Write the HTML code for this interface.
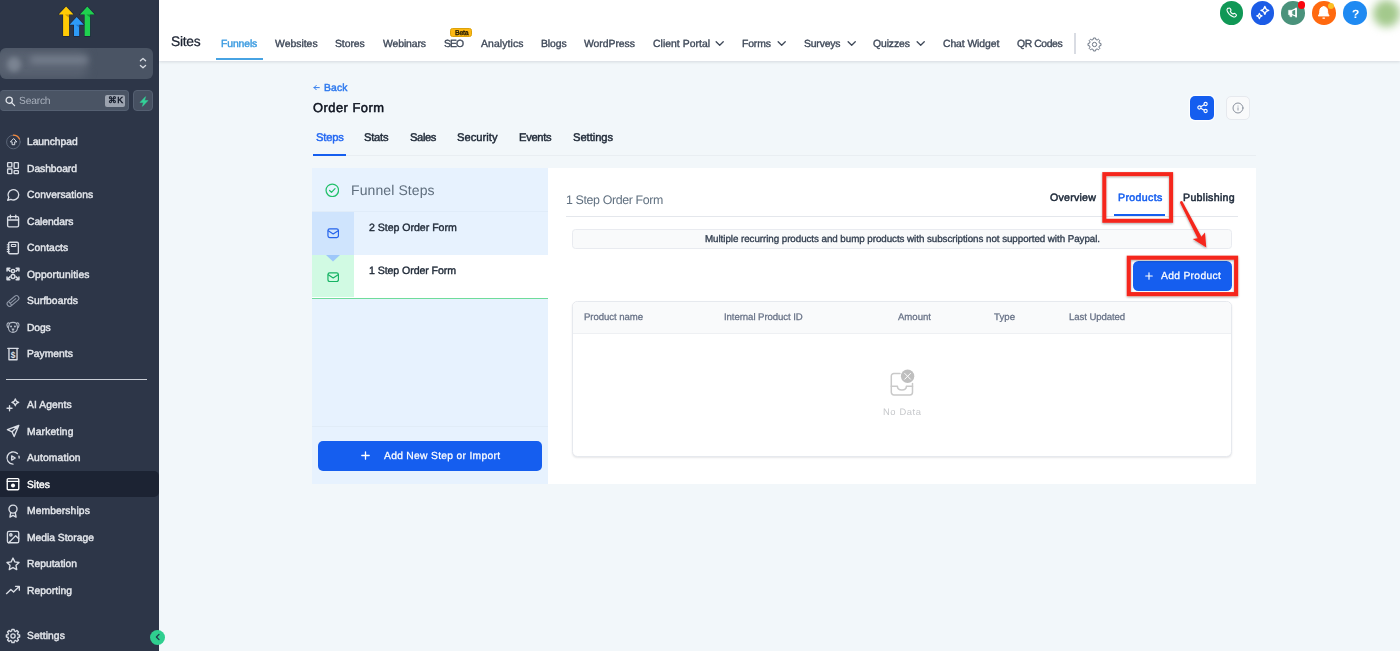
<!DOCTYPE html>
<html lang="en">
<head>
<meta charset="utf-8">
<title>Order Form - Funnels</title>
<style>
*{box-sizing:border-box;margin:0;padding:0}
html,body{width:1400px;height:651px;overflow:hidden;background:#f2f7fa;font-family:"Liberation Sans",sans-serif;color:#1f2937}
.abs{position:absolute}
.x{position:absolute;white-space:nowrap;display:block;will-change:transform;text-rendering:geometricPrecision}
#side{position:absolute;left:0;top:0;width:159px;height:651px;background:#2d3648}
#acct{position:absolute;left:0;top:48px;width:153px;height:30.500px;background:#4a5464;border-radius:6px}
#search{position:absolute;left:0;top:90px;width:128.500px;height:21px;background:#4a5464;border:1px solid #556072;border-left:0;border-radius:4px}
#search .k{position:absolute;left:105px;top:3.500px;width:20px;height:12px;background:#9ca3af;border-radius:2px}
#bolt{position:absolute;left:132.700px;top:90px;width:20.300px;height:21px;background:#465061;border:1px solid #556072;border-radius:4px}
.nav{position:absolute;left:0;width:159px;height:26px}
.nav svg{position:absolute;left:5px;top:5px;width:16px;height:16px;stroke:#d9dde5;fill:none;stroke-width:1.4;stroke-linecap:round;stroke-linejoin:round}
.nav.act{background:#1c2333;border-radius:0 5px 5px 0}
#top{position:absolute;left:159px;top:0;width:1241px;height:61px;background:#fff;box-shadow:0 1px 3px rgba(16,24,40,.13)}
.circ{position:absolute;top:1.300px;width:23.400px;height:23.400px;border-radius:50%}
.circ svg{position:absolute;left:0;top:0}
</style>
</head>
<body>
<div id="side">
  <svg class="abs" style="left:45px;top:0px" width="65" height="45" viewBox="45 0 65 45">
    <g stroke="#1c2439" stroke-width="1.200" stroke-linejoin="round" paint-order="stroke">
    <path d="M66.100 6.600L73.500 14.500H69.100V36.100H63.100V14.500H58.600z" fill="#ffcb05"/>
    <path d="M87.300 6.600L94.700 14.500H90.100V36.100H84.600V14.500H79.900z" fill="#1fd14f"/>
    <path d="M76.700 17.100L83.900 24.800H79.200V36.100H74V24.800H69.500z" fill="#2e9bf7"/>
    </g>
    <path d="M65 14.500H69.100V17.800z" fill="#b8860b" opacity=".75"/>
    <path d="M86.400 14.500H90.100V17.600z" fill="#0c8a2e" opacity=".75"/>
    <path d="M75.700 24.800H79.200V27.600z" fill="#1a6fc4" opacity=".75"/>
  </svg>
  <div id="acct" style="overflow:hidden">
    <div class="abs" style="left:-4px;top:2px;width:92px;height:27px;border-radius:8px;background:#5a6372;filter:blur(4px)"></div>
    <div class="abs" style="left:7px;top:8.5px;width:14px;height:15px;border-radius:50%;background:#7a8391;filter:blur(2.500px)"></div>
    <div class="abs" style="left:30px;top:8px;width:58px;height:8px;border-radius:4px;background:#737c8b;filter:blur(3px)"></div>
    <svg class="abs" style="left:138px;top:8px" width="10" height="14" viewBox="0 0 10 14" fill="none" stroke="#d5d9e0" stroke-width="1.300" stroke-linecap="round" stroke-linejoin="round"><path d="M2.400 4.800 L5 2.400 L7.600 4.800"/><path d="M2.400 9.400 L5 11.800 L7.600 9.400"/></svg>
  </div>
  <div id="search">
    <svg class="abs" style="left:4.500px;top:5px" width="11" height="11" viewBox="0 0 11 11" fill="none" stroke="#e2e6ec" stroke-width="1.3" stroke-linecap="round"><circle cx="4.2" cy="4.2" r="3.1"/><path d="M6.6 6.6 L9.6 9.6"/></svg>
    <span class="k"></span>
  </div>
  <span class="x" style="left:18.6px;top:95.0px;font-size:10.3px;line-height:14px;color:#a9b1bd;letter-spacing:-0.207px;">Search</span>
  <span class="x" style="left:107.6px;top:94.0px;font-size:8.8px;line-height:12px;color:#111827;letter-spacing:0.564px;-webkit-text-stroke:.4px currentColor;">⌘K</span>
  <div id="bolt"><svg class="abs" style="left:5.200px;top:5px" width="10" height="11" viewBox="0 0 10 11"><path d="M6.600 0.600 L1 6.400 H4.400 L3.400 10.400 L9 4.600 H5.600 Z" fill="#34d399" stroke="#34d399" stroke-width=".5" stroke-linejoin="round"/></svg></div>
  <div class="nav" style="top:128.6px"><svg viewBox="0 0 16 16"><circle cx="8.400" cy="8" r="6.800" stroke="#5f697c" stroke-width=".9"/><path d="M8.400 1.200 A6.800 6.800 0 0 1 14.500 5" stroke="#f5893b" stroke-width="1.200"/><path d="M8.400 4.800 L5.400 7.900 H7.100 V10.700 H9.700 V7.900 H11.400 Z" stroke-width="1"/></svg><span class="x" style="left:26.6px;top:7.4px;font-size:10.3px;line-height:14px;color:#e4e7ec;letter-spacing:-0.041px;-webkit-text-stroke:.42px currentColor;">Launchpad</span></div>
<div class="nav" style="top:155.1px"><svg viewBox="0 0 16 16"><g transform="translate(8 8) scale(.96) translate(-8 -8)"><rect x="2.4" y="2.4" width="4.4" height="4.4" rx=".6"/><rect x="9.2" y="2.4" width="4.4" height="6" rx=".6"/><rect x="2.4" y="9" width="4.4" height="4.8" rx=".6"/><rect x="9.2" y="10.8" width="4.4" height="3" rx=".6"/></g></svg><span class="x" style="left:26.6px;top:7.9px;font-size:10.3px;line-height:14px;color:#e4e7ec;letter-spacing:-0.053px;-webkit-text-stroke:.42px currentColor;">Dashboard</span></div>
<div class="nav" style="top:181.6px"><svg viewBox="0 0 16 16"><g transform="translate(8 8) scale(.96) translate(-8 -8)"><path d="M14 7.800a5.6 5.3 0 0 1-8.2 4.700L2.4 13.600l1.2-3.100A5.6 5.3 0 1 1 14 7.800z"/></g></svg><span class="x" style="left:26.6px;top:7.4px;font-size:10.3px;line-height:14px;color:#e4e7ec;letter-spacing:0.036px;-webkit-text-stroke:.42px currentColor;">Conversations</span></div>
<div class="nav" style="top:208.1px"><svg viewBox="0 0 16 16"><g transform="translate(8 8) scale(.96) translate(-8 -8)"><rect x="2.4" y="3.4" width="11.4" height="10.8" rx="1.4"/><path d="M5.3 1.800v3M10.9 1.800v3M2.4 7h11.4"/></g></svg><span class="x" style="left:26.6px;top:7.9px;font-size:10.3px;line-height:14px;color:#e4e7ec;letter-spacing:-0.060px;-webkit-text-stroke:.42px currentColor;">Calendars</span></div>
<div class="nav" style="top:234.6px"><svg viewBox="0 0 16 16"><g transform="translate(8 8) scale(.96) translate(-8 -8)"><rect x="3.4" y="2" width="10.2" height="12" rx="1.4"/><rect x="6.3" y="4.4" width="4.6" height="2" rx=".5" stroke-width="1.2"/><path d="M2 4.600h2M2 7h2M2 9.400h2M2 11.800h2" stroke-width="1.2"/></g></svg><span class="x" style="left:26.6px;top:7.4px;font-size:10.3px;line-height:14px;color:#e4e7ec;letter-spacing:0.082px;-webkit-text-stroke:.42px currentColor;">Contacts</span></div>
<div class="nav" style="top:261.1px"><svg viewBox="0 0 16 16"><g transform="translate(8 8) scale(.96) translate(-8 -8)"><g stroke-width="1.5"><circle cx="8" cy="4.9" r="1.7"/><circle cx="8" cy="10.6" r="2"/><path d="M1.8 5V2h3M14.2 5V2h-3M1.8 11v3h3M14.2 11v3h-3M2.2 2.400l2.600 2.600M13.800 2.400l-2.600 2.600M2.200 13.600l2.600-2.600M13.800 13.600l-2.600-2.600"/></g></g></svg><span class="x" style="left:26.6px;top:7.9px;font-size:10.3px;line-height:14px;color:#e4e7ec;letter-spacing:0.104px;-webkit-text-stroke:.42px currentColor;">Opportunities</span></div>
<div class="nav" style="top:287.6px"><svg viewBox="0 0 16 16"><g transform="translate(8 8) scale(.96) translate(-8 -8)"><g stroke="#8d96a6" stroke-width="1.100" transform="rotate(-40 8 8)"><rect x=".8" y="5.400" width="14.400" height="5.200" rx="2.600"/><path d="M4.200 5.600v4.800M4.200 8h7.600"/></g></g></svg><span class="x" style="left:26.6px;top:7.4px;font-size:10.3px;line-height:14px;color:#e4e7ec;letter-spacing:0.052px;-webkit-text-stroke:.42px currentColor;">Surfboards</span></div>
<div class="nav" style="top:314.1px"><svg viewBox="0 0 16 16"><g transform="translate(8 8) scale(.96) translate(-8 -8)"><g stroke="#b5bcc8" stroke-width="1.1"><path d="M4.4 4.200C3 3 1.4 4.2 1.8 6.600c.2 1.2.8 2 1.4 2.200M11.6 4.200c1.4-1.2 3 0 2.6 2.4-.2 1.2-.8 2-1.4 2.2"/><path d="M4.4 4.200c1-.8 2.2-1 3.6-1s2.6.2 3.6 1c.6 1.6 1.4 3.6 1 5.6-.4 2.2-2.4 3.8-4.6 3.800S3.8 12 3.4 9.800c-.4-2 .4-4 1-5.600z"/><circle cx="6" cy="7.4" r=".5" fill="#b5bcc8"/><circle cx="10" cy="7.4" r=".5" fill="#b5bcc8"/><path d="M7 10h2l-1 1.200zM8 11.200v1.2"/></g></g></svg><span class="x" style="left:26.6px;top:7.9px;font-size:10.3px;line-height:14px;color:#e4e7ec;letter-spacing:-0.137px;-webkit-text-stroke:.42px currentColor;">Dogs</span></div>
<div class="nav" style="top:340.6px"><svg viewBox="0 0 16 16"><g transform="translate(8 8) scale(.96) translate(-8 -8)"><path d="M2.6 2.200h10.800M3.8 2.200v11.800h8.400V2.2"/><text x="8" y="12" text-anchor="middle" font-size="8.6" font-weight="bold" fill="#dfe3ea" stroke="none" font-family="Liberation Sans, sans-serif">$</text></g></svg><span class="x" style="left:26.6px;top:7.4px;font-size:10.3px;line-height:14px;color:#e4e7ec;letter-spacing:0.000px;-webkit-text-stroke:.42px currentColor;">Payments</span></div>
<div class="abs" style="left:6px;top:378.500px;width:141px;height:1.500px;background:#c9ced6"></div>
<div class="nav" style="top:391.6px"><svg viewBox="0 0 16 16"><g transform="translate(8 8) scale(.96) translate(-8 -8)"><path d="M10.4 1.600c.4 2.4 1.2 3.2 3.6 3.6-2.4.4-3.2 1.2-3.6 3.6-.4-2.4-1.2-3.2-3.6-3.6 2.4-.4 3.2-1.2 3.6-3.600z" stroke-width="1.3"/><path d="M4.4 8.800v5.200M1.8 11.400h5.2"/></g></svg><span class="x" style="left:26.6px;top:7.4px;font-size:10.3px;line-height:14px;color:#e4e7ec;letter-spacing:0.078px;-webkit-text-stroke:.42px currentColor;">AI Agents</span></div>
<div class="nav" style="top:418.1px"><svg viewBox="0 0 16 16"><g transform="translate(8 8) scale(.96) translate(-8 -8)"><path d="M14 2.200L2.2 6.600l4.8 2.2 2.2 5zM14 2.200L7 8.8"/></g></svg><span class="x" style="left:26.6px;top:7.9px;font-size:10.3px;line-height:14px;color:#e4e7ec;letter-spacing:0.153px;-webkit-text-stroke:.42px currentColor;">Marketing</span></div>
<div class="nav" style="top:444.6px"><svg viewBox="0 0 16 16"><g transform="translate(8 8) scale(.96) translate(-8 -8)"><path d="M12.6 3.400A6.4 6.4 0 1 0 8 14.4" /><path d="M14.2 6.200A6.4 6.4 0 0 1 14.4 8"/><path d="M6.6 5.800v4.400l3.8-2.200z" stroke-width="1.3"/></g></svg><span class="x" style="left:26.6px;top:7.4px;font-size:10.3px;line-height:14px;color:#e4e7ec;letter-spacing:0.161px;-webkit-text-stroke:.42px currentColor;">Automation</span></div>
<div class="nav act" style="top:471.1px"><svg viewBox="0 0 16 16"><g transform="translate(8 8) scale(.96) translate(-8 -8)"><rect x="2" y="2.4" width="12" height="11.6" rx="1" stroke="#fff"/><path d="M2 5.200h12" stroke="#fff"/><circle cx="8" cy="9.6" r="2.1" fill="#fff" stroke="none"/></g></svg><span class="x" style="left:26.6px;top:7.9px;font-size:10.3px;line-height:14px;color:#fff;letter-spacing:-0.001px;-webkit-text-stroke:.42px currentColor;">Sites</span></div>
<div class="nav" style="top:497.6px"><svg viewBox="0 0 16 16"><g transform="translate(8 8) scale(.96) translate(-8 -8)"><circle cx="8" cy="6" r="4.2"/><path d="M5.6 9.600L4.8 14.4 8 12.600l3.2 1.8-.8-4.8"/></g></svg><span class="x" style="left:26.6px;top:7.4px;font-size:10.3px;line-height:14px;color:#e4e7ec;letter-spacing:0.099px;-webkit-text-stroke:.42px currentColor;">Memberships</span></div>
<div class="nav" style="top:524.1px"><svg viewBox="0 0 16 16"><g transform="translate(8 8) scale(.96) translate(-8 -8)"><rect x="2.2" y="2.2" width="11.8" height="11.8" rx="1.6"/><circle cx="5.8" cy="5.8" r="1.2"/><path d="M14 9.800l-3.2-3.200L3.6 14"/></g></svg><span class="x" style="left:26.6px;top:7.9px;font-size:10.3px;line-height:14px;color:#e4e7ec;letter-spacing:-0.006px;-webkit-text-stroke:.42px currentColor;">Media Storage</span></div>
<div class="nav" style="top:550.6px"><svg viewBox="0 0 16 16"><g transform="translate(8 8) scale(.96) translate(-8 -8)"><path d="M8 1.800l1.9 4 4.4.6-3.2 3 .8 4.400L8 11.700l-3.9 2.1.8-4.4-3.2-3 4.4-.6z"/></g></svg><span class="x" style="left:26.6px;top:7.4px;font-size:10.3px;line-height:14px;color:#e4e7ec;letter-spacing:0.029px;-webkit-text-stroke:.42px currentColor;">Reputation</span></div>
<div class="nav" style="top:577.1px"><svg viewBox="0 0 16 16"><g transform="translate(8 8) scale(.96) translate(-8 -8)"><path d="M1.2 11.800l4.6-4.4 2.8 2.6 5.8-5.600M10.6 4.200h4v4"/></g></svg><span class="x" style="left:26.6px;top:7.9px;font-size:10.3px;line-height:14px;color:#e4e7ec;letter-spacing:0.049px;-webkit-text-stroke:.42px currentColor;">Reporting</span></div>
<div class="nav" style="top:622.6px"><svg viewBox="0 0 16 16"><g transform="translate(8 8) scale(.96) translate(-8 -8)"><circle cx="8" cy="8" r="2.200"/><path d="M6.66 2.77L6.85 1.09L9.15 1.09L9.34 2.77L10.75 3.35L12.07 2.30L13.70 3.93L12.65 5.25L13.23 6.66L14.91 6.85L14.91 9.15L13.23 9.34L12.65 10.75L13.70 12.07L12.07 13.70L10.75 12.65L9.34 13.23L9.15 14.91L6.85 14.91L6.66 13.23L5.25 12.65L3.93 13.70L2.30 12.07L3.35 10.75L2.77 9.34L1.09 9.15L1.09 6.85L2.77 6.66L3.35 5.25L2.30 3.93L3.93 2.30L5.25 3.35z" stroke-width="1.400"/></g></svg><span class="x" style="left:26.6px;top:7.4px;font-size:10.3px;line-height:14px;color:#e4e7ec;letter-spacing:0.085px;-webkit-text-stroke:.42px currentColor;">Settings</span></div>
</div>
<div class="abs" style="left:150.100px;top:629.600px;width:15px;height:15px;border-radius:50%;background:#2fcf8f;z-index:5"><svg class="abs" style="left:3.500px;top:3.500px" width="8" height="8" viewBox="0 0 8 8" fill="none" stroke="#1f3b4a" stroke-width="1.3" stroke-linecap="round" stroke-linejoin="round"><path d="M5 1.400L2.4 4 5 6.6"/></svg></div>

<div id="top"></div>
<span class="x" style="left:171.2px;top:32.0px;font-size:13.8px;line-height:19px;color:#1d2433;letter-spacing:-0.257px;-webkit-text-stroke:.25px currentColor;">Sites</span>
<span class="x" style="left:221.4px;top:37.0px;font-size:10.4px;line-height:15px;color:#3b9be0;letter-spacing:-0.110px;-webkit-text-stroke:.42px currentColor;">Funnels</span>
<div class="abs" style="left:215.700px;top:57.700px;width:47.600px;height:2.100px;background:#47a3e3"></div>
<span class="x" style="left:275.1px;top:37.0px;font-size:10.4px;line-height:15px;color:#3f4959;letter-spacing:0.007px;-webkit-text-stroke:.36px currentColor;">Websites</span><span class="x" style="left:335.4px;top:37.0px;font-size:10.4px;line-height:15px;color:#3f4959;letter-spacing:-0.072px;-webkit-text-stroke:.36px currentColor;">Stores</span><span class="x" style="left:382.8px;top:37.0px;font-size:10.4px;line-height:15px;color:#3f4959;letter-spacing:-0.100px;-webkit-text-stroke:.36px currentColor;">Webinars</span><span class="x" style="left:443.9px;top:37.0px;font-size:10.4px;line-height:15px;color:#3f4959;letter-spacing:-0.984px;-webkit-text-stroke:.36px currentColor;">SEO</span><span class="x" style="left:480.6px;top:37.0px;font-size:10.4px;line-height:15px;color:#3f4959;letter-spacing:0.114px;-webkit-text-stroke:.36px currentColor;">Analytics</span><span class="x" style="left:540.9px;top:37.0px;font-size:10.4px;line-height:15px;color:#3f4959;letter-spacing:-0.060px;-webkit-text-stroke:.36px currentColor;">Blogs</span><span class="x" style="left:584.3px;top:37.0px;font-size:10.4px;line-height:15px;color:#3f4959;letter-spacing:-0.034px;-webkit-text-stroke:.36px currentColor;">WordPress</span><span class="x" style="left:652.5px;top:37.0px;font-size:10.4px;line-height:15px;color:#3f4959;letter-spacing:0.038px;-webkit-text-stroke:.36px currentColor;">Client Portal</span><span class="x" style="left:742.4px;top:37.0px;font-size:10.4px;line-height:15px;color:#3f4959;letter-spacing:-0.127px;-webkit-text-stroke:.36px currentColor;">Forms</span><span class="x" style="left:804.4px;top:37.0px;font-size:10.4px;line-height:15px;color:#3f4959;letter-spacing:-0.178px;-webkit-text-stroke:.36px currentColor;">Surveys</span><span class="x" style="left:873.4px;top:37.0px;font-size:10.4px;line-height:15px;color:#3f4959;letter-spacing:-0.107px;-webkit-text-stroke:.36px currentColor;">Quizzes</span><span class="x" style="left:943px;top:37.0px;font-size:10.4px;line-height:15px;color:#3f4959;letter-spacing:-0.090px;-webkit-text-stroke:.36px currentColor;">Chat Widget</span><span class="x" style="left:1016.9px;top:37.0px;font-size:10.4px;line-height:15px;color:#3f4959;letter-spacing:-0.414px;-webkit-text-stroke:.36px currentColor;">QR Codes</span>
<svg class="abs" style="left:715.3px;top:39.600px" width="9.400" height="7.500" viewBox="0 0 10 8" fill="none" stroke="#3f4959" stroke-width="1.400" stroke-linecap="round" stroke-linejoin="round"><path d="M1.2 1.8L5 5.6 8.8 1.8"/></svg><svg class="abs" style="left:777.3px;top:39.600px" width="9.400" height="7.500" viewBox="0 0 10 8" fill="none" stroke="#3f4959" stroke-width="1.400" stroke-linecap="round" stroke-linejoin="round"><path d="M1.2 1.8L5 5.6 8.8 1.8"/></svg><svg class="abs" style="left:846.8px;top:39.600px" width="9.400" height="7.500" viewBox="0 0 10 8" fill="none" stroke="#3f4959" stroke-width="1.400" stroke-linecap="round" stroke-linejoin="round"><path d="M1.2 1.8L5 5.6 8.8 1.8"/></svg><svg class="abs" style="left:915.9px;top:39.600px" width="9.400" height="7.500" viewBox="0 0 10 8" fill="none" stroke="#3f4959" stroke-width="1.400" stroke-linecap="round" stroke-linejoin="round"><path d="M1.2 1.8L5 5.6 8.8 1.8"/></svg>
<div class="abs" style="left:450.300px;top:28.200px;width:22.200px;height:8.800px;background:#fdb813;border:.6px solid #dca20a;border-radius:2.500px"></div>
<span class="x" style="left:454.8px;top:29.0px;font-size:7px;line-height:10px;color:#2b2003;letter-spacing:-0.252px;-webkit-text-stroke:.35px currentColor;">Beta</span>
<div class="abs" style="left:1074.200px;top:33.200px;width:1.700px;height:20.600px;background:#d9dce3"></div>
<svg class="abs" style="left:1087.200px;top:36.700px" width="15" height="15" viewBox="0 0 16 16" fill="none" stroke="#6b7483" stroke-width="1.050" stroke-linejoin="round"><circle cx="8" cy="8" r="2.300"/><path d="M6.63 2.67L6.85 1.09L9.15 1.09L9.37 2.67L10.80 3.27L12.07 2.30L13.70 3.93L12.73 5.20L13.33 6.63L14.91 6.85L14.91 9.15L13.33 9.37L12.73 10.80L13.70 12.07L12.07 13.70L10.80 12.73L9.37 13.33L9.15 14.91L6.85 14.91L6.63 13.33L5.20 12.73L3.93 13.70L2.30 12.07L3.27 10.80L2.67 9.37L1.09 9.15L1.09 6.85L2.67 6.63L3.27 5.20L2.30 3.93L3.93 2.30L5.20 3.27z"/></svg>
<div class="circ" style="left:1219.6000000000001px;background:#109856"><svg width="23.400" height="23.400" viewBox="0 0 24 24" fill="none" stroke="#fff" stroke-width="1.5" stroke-linecap="round" stroke-linejoin="round"><g transform="translate(12 12) scale(0.85) translate(-12 -12)"><path d="M8.3 6.6c.5-.5 1.300-.4 1.700.2l1 1.500c.3.5.2 1.100-.2 1.500l-.5.5c.6 1.500 1.900 2.800 3.400 3.400l.5-.5c.4-.4 1-.5 1.500-.2l1.500 1c.6.4.7 1.200.2 1.700l-.7.7c-.8.8-2 1-3 .6-3.300-1.300-5.900-3.900-7.200-7.200-.4-1-.2-2.200.6-3z" stroke-width="1.300"/></g></svg></div>
<div class="circ" style="left:1250.5px;background:#1c5ce6"><svg width="23.400" height="23.400" viewBox="0 0 24 24" fill="none" stroke="#fff" stroke-width="1.5" stroke-linecap="round" stroke-linejoin="round"><g transform="translate(12 12) scale(1) translate(-12 -12)"><path d="M14.200 5.600c.5 2.700 1.300 3.500 4 4-2.700.5-3.500 1.300-4 4-.5-2.700-1.300-3.500-4-4 2.700-.5 3.500-1.300 4-4z" stroke-width="1.400"/><path d="M8.600 12.600c.35 1.800.9 2.350 2.700 2.700-1.800.35-2.350.9-2.700 2.700-.35-1.800-.9-2.350-2.700-2.700 1.800-.35 2.350-.9 2.700-2.700z" stroke-width="1.300"/></g></svg></div>
<div class="circ" style="left:1281.4px;background:#4a927b"><svg width="23.400" height="23.400" viewBox="0 0 24 24" fill="none" stroke="#fff" stroke-width="1.5" stroke-linecap="round" stroke-linejoin="round"><g transform="translate(12 12) scale(0.86) translate(-12 -12)"><path d="M7.400 9.200H11.100V14.300H7.400z" fill="#fff" stroke="#fff" stroke-width=".8"/><path d="M8.500 14.300H11V16.800H9.200z" fill="#fff" stroke="#fff" stroke-width=".6"/><path d="M11.100 9.400L16 7.200V16.300L11.100 14.100" stroke-width="1.500"/><path d="M16.100 6.600V17" stroke-width="1.700"/></g></svg></div>
<div class="circ" style="left:1312.4px;background:#ff690f"><svg width="23.400" height="23.400" viewBox="0 0 24 24" fill="none" stroke="#fff" stroke-width="1.5" stroke-linecap="round" stroke-linejoin="round"><g transform="translate(12 12) scale(1) translate(-12 -12)"><path d="M12 5.800c-2.400 0-4 1.800-4 4.300 0 2.800-.7 4.200-1.600 5.200h11.200c-.9-1-1.600-2.400-1.600-5.200 0-2.500-1.600-4.300-4-4.300z" fill="#fff" stroke="#fff" stroke-width="1"/><path d="M11.200 17.500h1.600" stroke-width="1.300"/></g></svg></div>
<div class="circ" style="left:1343.4px;background:#1f8af2"><svg width="23.400" height="23.400" viewBox="0 0 24 24" fill="none" stroke="#fff" stroke-width="1.5" stroke-linecap="round" stroke-linejoin="round"><g transform="translate(12 12) scale(1) translate(-12 -12)"></g></svg></div>
<span class="x" style="left:1351.9px;top:6.0px;font-size:12px;line-height:17px;color:#fff;letter-spacing:-0.944px;font-weight:bold;">?</span>
<div class="abs" style="left:1297.600px;top:1.200px;width:7.700px;height:7.700px;border-radius:50%;background:#f9060e"></div>
<div class="abs" style="left:1328.300px;top:2.600px;width:6.200px;height:6.200px;border-radius:50%;background:#fbbf24"></div>
<div class="abs" style="left:1372.500px;top:0px;width:27px;height:27px;border-radius:50%;background:#a3c98c;filter:blur(4.500px)"></div>


<svg class="abs" style="left:313.300px;top:83.900px" width="7.200" height="7.200" viewBox="0 0 8 8" fill="none" stroke="#2e79ee" stroke-width="1.100" stroke-linecap="round" stroke-linejoin="round"><path d="M7 4H1.200M3.600 1.600L1.200 4l2.400 2.400"/></svg>
<span class="x" style="left:324.4px;top:82.0px;font-size:10.3px;line-height:14px;color:#2e79ee;letter-spacing:0.148px;-webkit-text-stroke:.45px currentColor;">Back</span>
<span class="x" style="left:312.8px;top:99.0px;font-size:12.9px;line-height:18px;color:#0c111d;letter-spacing:0.479px;-webkit-text-stroke:.5px currentColor;">Order Form</span>
<span class="x" style="left:315.5px;top:130.0px;font-size:11.2px;line-height:16px;color:#2468f2;letter-spacing:-0.202px;-webkit-text-stroke:.45px currentColor;">Steps</span>
<span class="x" style="left:364.2px;top:130.0px;font-size:11.2px;line-height:16px;color:#1f2937;letter-spacing:-0.240px;-webkit-text-stroke:.45px currentColor;">Stats</span><span class="x" style="left:409.9px;top:130.0px;font-size:11.2px;line-height:16px;color:#1f2937;letter-spacing:-0.380px;-webkit-text-stroke:.45px currentColor;">Sales</span><span class="x" style="left:457.4px;top:130.0px;font-size:11.2px;line-height:16px;color:#1f2937;letter-spacing:0.022px;-webkit-text-stroke:.45px currentColor;">Security</span><span class="x" style="left:519.4px;top:130.0px;font-size:11.2px;line-height:16px;color:#1f2937;letter-spacing:-0.301px;-webkit-text-stroke:.45px currentColor;">Events</span><span class="x" style="left:572.9px;top:130.0px;font-size:11.2px;line-height:16px;color:#1f2937;letter-spacing:-0.042px;-webkit-text-stroke:.45px currentColor;">Settings</span>
<div class="abs" style="left:312.5px;top:154.800px;width:943.3px;height:1px;background:#e9eef2"></div>
<div class="abs" style="left:312.5px;top:154px;width:33.600px;height:2px;background:#155eef"></div>
<div class="abs" style="left:1190.400px;top:95.900px;width:23.800px;height:24px;border-radius:5px;background:#155eef;box-shadow:0 0 0 1.200px rgba(255,255,255,.85)">
 <svg class="abs" style="left:5.500px;top:5.500px" width="13" height="13" viewBox="0 0 13 13" fill="none" stroke="#fff" stroke-width="1.100"><circle cx="9.600" cy="3" r="1.600"/><circle cx="3.400" cy="6.500" r="1.600"/><circle cx="9.600" cy="10" r="1.600"/><path d="M4.800 5.700L8.200 3.800M4.800 7.300L8.200 9.200"/></svg>
</div>
<div class="abs" style="left:1226.300px;top:95.900px;width:23.500px;height:24px;border-radius:5px;background:#f9fafb;border:1px solid #e6e9ee">
 <svg class="abs" style="left:4.700px;top:5px" width="12" height="12" viewBox="0 0 12 12" fill="none" stroke="#8a919e" stroke-width="1" stroke-linecap="round"><circle cx="6" cy="6" r="5"/><path d="M6 5.800v2.300M6 4v.1" stroke-width=".9"/></svg>
</div>

<div class="abs" style="left:312.400px;top:167.600px;width:235.400px;height:316.200px;background:#e7f2fe"></div>
<div class="abs" style="left:312.400px;top:211.400px;width:235.400px;height:1px;background:#e0ecf9"></div>
<svg class="abs" style="left:324.600px;top:182.500px" width="14.600" height="14.600" viewBox="0 0 14 14" fill="none" stroke="#22c06a" stroke-width="1.200" stroke-linecap="round" stroke-linejoin="round"><circle cx="7" cy="7" r="6"/><path d="M4.400 7.200l1.800 1.800 3.400-3.600"/></svg>
<span class="x" style="left:350.9px;top:180.0px;font-size:14px;line-height:20px;color:#5f6e7d;letter-spacing:0.100px;">Funnel Steps</span>
<div class="abs" style="left:312.400px;top:212.400px;width:41.400px;height:42.800px;background:#cfe4fd"></div>
<svg class="abs" style="left:326.8px;top:228.10000000000002px" width="12.400" height="10.500" viewBox="0 0 13 11" fill="none" stroke="#2563eb" stroke-width="1.250" stroke-linecap="round" stroke-linejoin="round"><rect x="1" y="1" width="11" height="9" rx="1.8"/><path d="M1.3 2.900L6.500 6.200 11.700 2.900"/></svg>
<span class="x" style="left:368.8px;top:221.0px;font-size:10.6px;line-height:15px;color:#1f2937;letter-spacing:-0.036px;-webkit-text-stroke:.4px currentColor;">2 Step Order Form</span>
<div class="abs" style="left:312.400px;top:255.100px;width:235.400px;height:43.500px;background:#fff;border-bottom:1.500px solid #6fdc9b"></div>
<div class="abs" style="left:312.400px;top:255.100px;width:41.400px;height:42px;background:#d1fae3"></div>
<svg class="abs" style="left:325.800px;top:255.100px" width="14" height="7" viewBox="0 0 14 7"><path d="M0 0h14L7 6.600z" fill="#9ec7fa"/></svg>
<svg class="abs" style="left:326.8px;top:271.7px" width="12.400" height="10.500" viewBox="0 0 13 11" fill="none" stroke="#16b364" stroke-width="1.250" stroke-linecap="round" stroke-linejoin="round"><rect x="1" y="1" width="11" height="9" rx="1.8"/><path d="M1.3 2.900L6.500 6.200 11.700 2.900"/></svg>
<span class="x" style="left:368.8px;top:264.0px;font-size:10.6px;line-height:15px;color:#1f2937;letter-spacing:-0.077px;-webkit-text-stroke:.4px currentColor;">1 Step Order Form</span>
<div class="abs" style="left:312.400px;top:425.600px;width:235.400px;height:1px;background:#e1ecf7"></div>
<div class="abs" style="left:318.400px;top:441px;width:223.900px;height:29.600px;border-radius:5px;background:#155eef"></div>
<svg class="abs" style="left:361.300px;top:451.400px" width="9" height="9" viewBox="0 0 9 9" stroke="#fff" stroke-width="1.300" stroke-linecap="round"><path d="M4.500 .8v7.400M.8 4.500h7.400"/></svg>
<span class="x" style="left:383.9px;top:450.0px;font-size:10.3px;line-height:14px;color:#fff;letter-spacing:0.296px;-webkit-text-stroke:.25px currentColor;">Add New Step or Import</span>

<div class="abs" style="left:547.800px;top:167.600px;width:708px;height:316.400px;background:#fff"></div>
<span class="x" style="left:566.2px;top:192.0px;font-size:12.4px;line-height:17px;color:#617181;letter-spacing:-0.370px;">1 Step Order Form</span>
<div class="abs" style="left:566px;top:215.500px;width:671.800px;height:1px;background:#e4e7ec"></div>
<span class="x" style="left:1050.1px;top:191.0px;font-size:10.6px;line-height:15px;color:#1d2939;letter-spacing:0.243px;-webkit-text-stroke:.5px currentColor;">Overview</span>
<span class="x" style="left:1117.6px;top:191.0px;font-size:10.6px;line-height:15px;color:#155eef;letter-spacing:0.348px;-webkit-text-stroke:.5px currentColor;">Products</span>
<span class="x" style="left:1182.8px;top:191.0px;font-size:10.6px;line-height:15px;color:#1d2939;letter-spacing:0.311px;-webkit-text-stroke:.5px currentColor;">Publishing</span>
<div class="abs" style="left:1114.200px;top:213.900px;width:50.500px;height:2.100px;background:#155eef"></div>
<div class="abs" style="left:571.800px;top:228.900px;width:659.800px;height:20.400px;border:1px solid #e9ebf0;border-radius:3.500px;background:#f9fafb"></div>
<span class="x" style="left:704.5px;top:233.0px;font-size:9.8px;line-height:14px;color:#333f50;letter-spacing:-0.058px;-webkit-text-stroke:.35px currentColor;">Multiple recurring products and bump products with subscriptions not supported with Paypal.</span>
<div class="abs" style="left:1132.700px;top:260.700px;width:99.400px;height:29.900px;border-radius:5.500px;background:#155eef"></div>
<svg class="abs" style="left:1145px;top:272px" width="8" height="8" viewBox="0 0 9 9" stroke="#fff" stroke-width="1.300" stroke-linecap="round"><path d="M4.500 .8v7.400M.8 4.500h7.400"/></svg>
<span class="x" style="left:1161.4px;top:270.0px;font-size:10.3px;line-height:14px;color:#fff;letter-spacing:0.312px;-webkit-text-stroke:.25px currentColor;">Add Product</span>

<div class="abs" style="left:571.600px;top:301.300px;width:660.500px;height:156px;border:1px solid #e6e9ee;border-radius:5.500px;background:#fff;box-shadow:0 1px 2px rgba(16,24,40,.10);overflow:hidden"><div style="height:31.400px;background:#f9fafb;border-bottom:1px solid #eef0f3"></div></div>
<span class="x" style="left:584px;top:311.0px;font-size:9.6px;line-height:13px;color:#667085;letter-spacing:-0.061px;-webkit-text-stroke:.25px currentColor;">Product name</span><span class="x" style="left:723.9px;top:311.0px;font-size:9.6px;line-height:13px;color:#667085;letter-spacing:-0.068px;-webkit-text-stroke:.25px currentColor;">Internal Product ID</span><span class="x" style="left:898.3px;top:311.0px;font-size:9.6px;line-height:13px;color:#667085;letter-spacing:-0.030px;-webkit-text-stroke:.25px currentColor;">Amount</span><span class="x" style="left:993.9px;top:311.0px;font-size:9.6px;line-height:13px;color:#667085;letter-spacing:0.072px;-webkit-text-stroke:.25px currentColor;">Type</span><span class="x" style="left:1068.5px;top:311.0px;font-size:9.6px;line-height:13px;color:#667085;letter-spacing:-0.082px;-webkit-text-stroke:.25px currentColor;">Last Updated</span>
<svg class="abs" style="left:886px;top:366px" width="32" height="34" viewBox="886 366 32 34" fill="none" stroke="#c9c9c9" stroke-width="1.5" stroke-linejoin="round" stroke-linecap="round"><path d="M900 373.4H893.9a2.600 2.600 0 0 0-2.600 2.600V392.300a2.600 2.600 0 0 0 2.600 2.600H909.900a2.600 2.600 0 0 0 2.600-2.600V383.500"/><path d="M891.300 386.200H897.400c0 2.200 1.600 3.700 4.500 3.700s4.500-1.500 4.500-3.700H912.500"/><circle cx="907.600" cy="376.300" r="6.700" fill="#bfbfbf" stroke="none"/><path d="M904.700 373.400l5.800 5.800M910.500 373.400l-5.800 5.800" stroke="#fff" stroke-width="1"/></svg>
<span class="x" style="left:882.8px;top:405.0px;font-size:9.4px;line-height:13px;color:#c6c8cb;letter-spacing:0.599px;">No Data</span>

<svg class="abs" style="left:1095px;top:165px;overflow:visible" width="150" height="140" viewBox="1095 165 150 140" fill="none">
 <g filter="url(#ds)">
 <rect x="1104.300" y="174.100" width="66.800" height="46.700" stroke="#f5281f" stroke-width="4"/>
 <rect x="1128.800" y="257.700" width="107.300" height="36.400" stroke="#f5281f" stroke-width="4.100"/>
 <path d="M1180.200 203.200A1.400 1.400 0 0 1 1182.700 201.900L1202.300 238.200 1198.600 240.200z" fill="#f5281f"/>
 <path d="M1206.300 247.600L1192.800 239 1200.400 237.800 1205 232.600z" fill="#f5281f"/>
 </g>
 <defs><filter id="ds" x="-10%" y="-10%" width="120%" height="120%"><feDropShadow dx="0" dy="1" stdDeviation="1.200" flood-color="#000" flood-opacity=".35"/></filter></defs>
</svg>

</body>
</html>
